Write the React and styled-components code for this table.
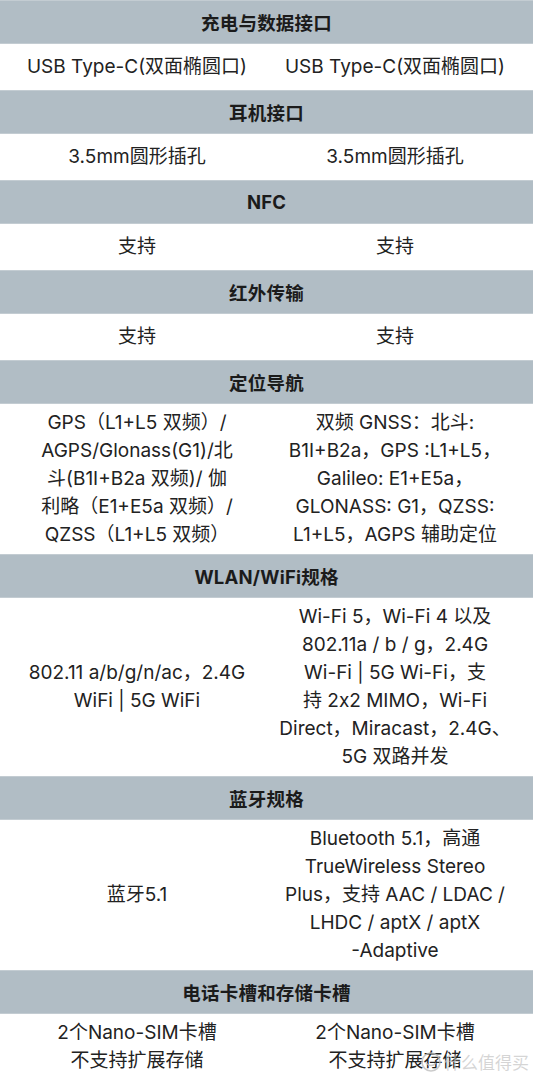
import React from "react";
import styled, { createGlobalStyle } from "styled-components";

const GlobalStyle = createGlobalStyle`
  html, body {
    margin: 0;
    padding: 0;
    background: #fff;
  }
  body {
    font-family: Inter, "Noto Sans CJK SC", sans-serif;
    color: #1e1e1e;
  }
`;

const Table = styled.div`
  width: 533px;
  height: 1080px;
  overflow: hidden;
  position: relative;
  background: #fff;
`;

const Header = styled.div`
  height: 44px;
  box-sizing: border-box;
  display: flex;
  align-items: center;
  justify-content: center;
  background: #b1bdc5;
  border-top: 1px solid #c3ccd2;
  border-bottom: 1px solid #c3ccd2;
  font-size: 18.5px;
  font-weight: 700;
  color: #1b1b1b;
  letter-spacing: 0.2px;
`;

const Row = styled.div`
  display: grid;
  grid-template-columns: 258px 258px;
  padding: 5px 9px 5px 8px;
  min-height: 46px;
  box-sizing: border-box;
  align-items: center;
`;

const Cell = styled.div`
  text-align: center;
  font-size: 19px;
  line-height: 28px;
  white-space: nowrap;
  color: #222;
`;

const Watermark = styled.div`
  position: absolute;
  right: 4px;
  bottom: 6px;
  display: flex;
  align-items: center;
  gap: 2px;
  font-size: 17px;
  color: rgba(200, 200, 200, 0.75);
  pointer-events: none;
`;

const spec = [
  {
    title: "充电与数据接口",
    left: ["USB Type-C(双面椭圆口)"],
    right: ["USB Type-C(双面椭圆口)"],
  },
  { title: "耳机接口", left: ["3.5mm圆形插孔"], right: ["3.5mm圆形插孔"] },
  { title: "NFC", left: ["支持"], right: ["支持"] },
  { title: "红外传输", left: ["支持"], right: ["支持"] },
  {
    title: "定位导航",
    left: [
      "GPS（L1+L5 双频）/",
      "AGPS/Glonass(G1)/北",
      "斗(B1I+B2a 双频)/ 伽",
      "利略（E1+E5a 双频）/",
      "QZSS（L1+L5 双频）",
    ],
    right: [
      "双频 GNSS：北斗:",
      "B1I+B2a，GPS :L1+L5，",
      "Galileo: E1+E5a，",
      "GLONASS: G1，QZSS:",
      "L1+L5，AGPS 辅助定位",
    ],
  },
  {
    title: "WLAN/WiFi规格",
    left: ["802.11 a/b/g/n/ac，2.4G", "WiFi | 5G WiFi"],
    right: [
      "Wi-Fi 5，Wi-Fi 4 以及",
      "802.11a / b / g，2.4G",
      "Wi-Fi | 5G Wi-Fi，支",
      "持 2x2 MIMO，Wi-Fi",
      "Direct，Miracast，2.4G、",
      "5G 双路并发",
    ],
  },
  {
    title: "蓝牙规格",
    left: ["蓝牙5.1"],
    right: [
      "Bluetooth 5.1，高通",
      "TrueWireless Stereo",
      "Plus，支持 AAC / LDAC /",
      "LHDC / aptX / aptX",
      "-Adaptive",
    ],
  },
  {
    title: "电话卡槽和存储卡槽",
    left: ["2个Nano-SIM卡槽", "不支持扩展存储"],
    right: ["2个Nano-SIM卡槽", "不支持扩展存储"],
  },
];

const Lines = ({ lines }) => (
  <Cell>
    {lines.map((l, i) => (
      <div key={i}>{l}</div>
    ))}
  </Cell>
);

const App = () => {
  return (
    <>
      <GlobalStyle />
      <Table>
        {spec.map(s => (
          <React.Fragment key={s.title}>
            <Header>{s.title}</Header>
            <Row>
              <Lines lines={s.left} />
              <Lines lines={s.right} />
            </Row>
          </React.Fragment>
        ))}
        <Watermark>
          <svg width="22" height="22" viewBox="0 0 22 22">
            <circle cx="11" cy="11" r="9" fill="none" stroke="rgba(190,190,190,0.8)" strokeWidth="1.6" />
            <path d="M6 12 Q11 17 16 12" fill="none" stroke="rgba(190,190,190,0.8)" strokeWidth="1.6" />
          </svg>
          <span>什么值得买</span>
        </Watermark>
      </Table>
    </>
  );
};

export default App;
